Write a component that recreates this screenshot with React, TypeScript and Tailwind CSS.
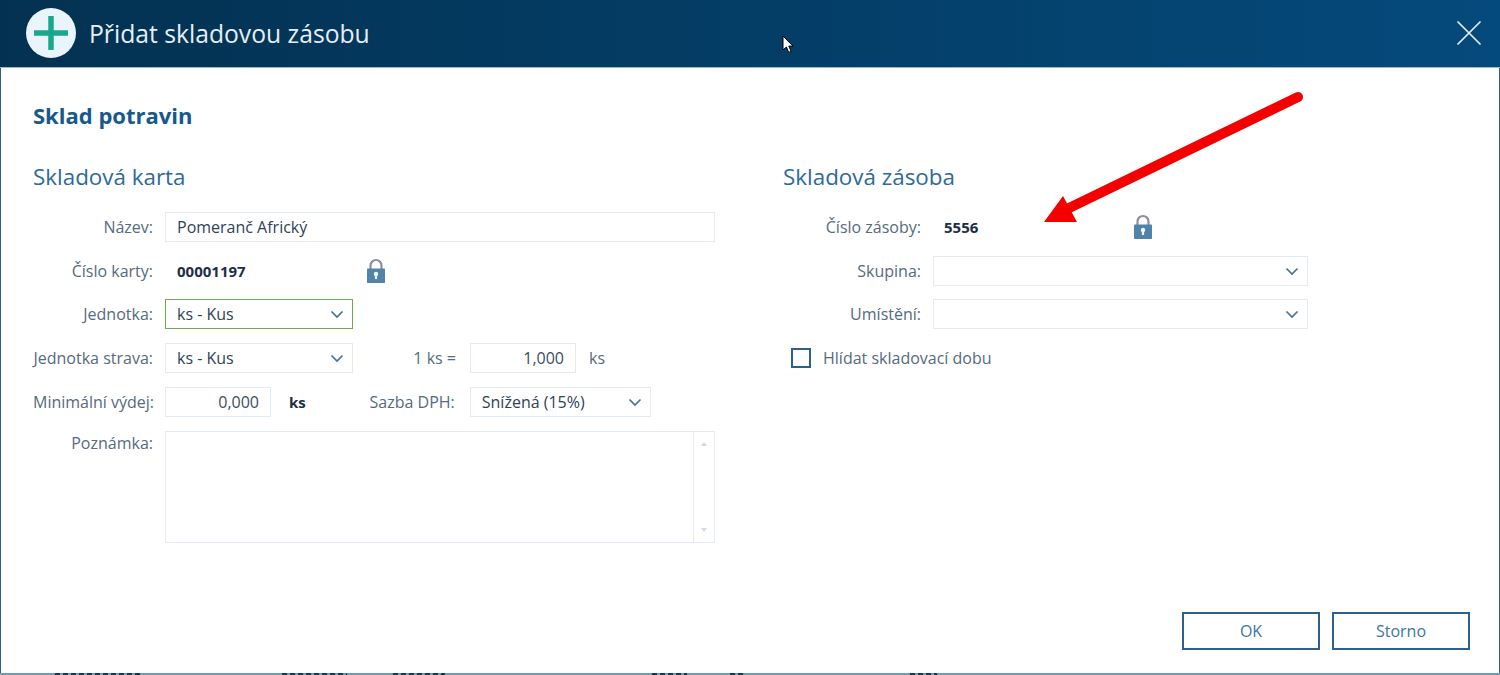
import React from 'react';

const font = "font-['Open_Sans',sans-serif]";
const fieldBorder = 'border border-[#e3e9f5] bg-white';
const stripText = 'h-full bg-[repeating-linear-gradient(90deg,#12365a_0_5px,#6f9bb8_5px_8px)]';

function Chevron() {
  return (
    <svg width="14" height="9" viewBox="0 0 14 9" fill="none" className="shrink-0">
      <path d="M1.5 1.5 7 7l5.5-5.5" stroke="#4a7196" strokeWidth="1.7" />
    </svg>
  );
}

function Lock() {
  return (
    <svg width="20" height="26" viewBox="0 0 20 26">
      <path d="M4.5 12V7.5a5.5 5.5 0 0 1 11 0V12" fill="none" stroke="#8f8ea3" strokeWidth="2.2" />
      <rect x="1" y="10.5" width="18" height="14.5" rx="0.8" fill="#4f84a8" />
      <circle cx="10" cy="16" r="2.2" fill="#f2f7fa" />
      <rect x="8.9" y="16" width="2.2" height="5" fill="#f2f7fa" />
    </svg>
  );
}

function Label({ children, width = 'w-[120px]' }: { children: React.ReactNode; width?: string }) {
  return <div className={`${width} shrink-0 text-right whitespace-nowrap text-[#566a80]`}>{children}</div>;
}

function SelectBox({ value, width, green }: { value?: string; width: string; green?: boolean }) {
  return (
    <div className={`${width} h-[30px] flex items-center justify-between pl-[11px] pr-[8px] bg-white border text-[#2f4257] ${green ? 'border-[#6fa84f]' : 'border-[#e3e9f5]'}`}>
      <span>{value}</span>
      <Chevron />
    </div>
  );
}

function NumberBox({ value }: { value: string }) {
  return (
    <div className={`w-[106px] h-[30px] flex items-center justify-end pr-[11px] text-[#3b4d61] ${fieldBorder}`}>
      {value}
    </div>
  );
}

function Row({ children, className = '' }: { children: React.ReactNode; className?: string }) {
  return <div className={`flex items-center h-[30px] ${className}`}>{children}</div>;
}

export default function App() {
  return (
    <div className={`${font} relative flex flex-col h-[675px] w-[1500px] overflow-hidden bg-white text-[16px] leading-none`}>
      <div className="flex flex-col h-[673px] shrink-0 border-x border-[#2b5f8a]">
        <header className="-mx-px h-[68px] shrink-0 flex items-center justify-between pl-[26px] pr-[18px] pb-px bg-gradient-to-r from-[#033151] to-[#054a7c] border-b border-[#9db6cb]">
          <div className="flex items-center gap-[13px]">
            <div className="w-[50px] h-[50px] rounded-full bg-[#eaf5fb] flex items-center justify-center">
              <svg width="34" height="34" viewBox="0 0 34 34">
                <path d="M17 0v34M0 17h34" stroke="#1aa88c" strokeWidth="5.5" />
              </svg>
            </div>
            <h1 className="mt-[2px] text-[24.7px] text-[#e6eef4]">Přidat skladovou zásobu</h1>
          </div>
          <svg width="26" height="26" viewBox="0 0 26 26">
            <path d="M1.5 1.5l23 23M24.5 1.5l-23 23" stroke="#e6eef4" strokeWidth="1.7" />
          </svg>
        </header>

        <main className="flex-1 flex flex-col pl-[32px] pr-[29px] pb-[23px]">
          <h2 className="mt-[36px] h-[22px] text-[22px] font-bold text-[#17598c]">Sklad potravin</h2>

          <div className="mt-[40px] flex flex-1">
            <section className="w-[750px] shrink-0">
              <h3 className="h-[22px] text-[22.4px] text-[#2d6a99]">Skladová karta</h3>
              <div className="mt-[24px] flex flex-col gap-[14px]">
                <Row>
                  <Label>Název:</Label>
                  <div className={`ml-[12px] w-[550px] h-[30px] flex items-center pl-[11px] text-[#2f4257] ${fieldBorder}`}>Pomeranč Africký</div>
                </Row>
                <Row>
                  <Label>Číslo karty:</Label>
                  <b className="ml-[24px] w-[189px] text-[15px] text-[#1d2f45]">00001197</b>
                  <Lock />
                </Row>
                <Row className="-mt-px">
                  <Label>Jednotka:</Label>
                  <div className="ml-[12px]"><SelectBox value="ks - Kus" width="w-[188px]" green /></div>
                </Row>
                <Row>
                  <Label>Jednotka strava:</Label>
                  <div className="ml-[12px]"><SelectBox value="ks - Kus" width="w-[188px]" /></div>
                  <div className="w-[103px] text-right text-[#566a80]">1 ks =</div>
                  <div className="ml-[14px]"><NumberBox value="1,000" /></div>
                  <span className="ml-[13px] text-[#566a80]">ks</span>
                </Row>
                <Row>
                  <Label>Minimální výdej:</Label>
                  <div className="ml-[12px]"><NumberBox value="0,000" /></div>
                  <b className="ml-[18px] text-[15px] text-[#1d2f45]">ks</b>
                  <div className="w-[149px] text-right text-[#566a80]">Sazba DPH:</div>
                  <div className="ml-[15px]"><SelectBox value="Snížená (15%)" width="w-[181px]" /></div>
                </Row>
                <div className="flex items-start">
                  <Label><span className="block pt-[4px]">Poznámka:</span></Label>
                  <div className={`ml-[12px] w-[550px] h-[112px] flex justify-end ${fieldBorder}`}>
                    <div className="w-[21px] flex flex-col items-center justify-between py-[10px] border-l border-[#e6e9ee]">
                      <div className="w-0 h-0 border-x-[3.5px] border-x-transparent border-b-[4px] border-b-[#d4d8dd]" />
                      <div className="w-0 h-0 border-x-[3.5px] border-x-transparent border-t-[4px] border-t-[#d4d8dd]" />
                    </div>
                  </div>
                </div>
              </div>
            </section>

            <section className="flex-1">
              <h3 className="h-[22px] text-[22.4px] text-[#2d6a99]">Skladová zásoba</h3>
              <div className="mt-[24px] flex flex-col gap-[14px]">
                <Row>
                  <Label width="w-[138px]">Číslo zásoby:</Label>
                  <b className="ml-[23px] w-[189px] text-[15px] text-[#1d2f45]">5556</b>
                  <Lock />
                </Row>
                <Row>
                  <Label width="w-[138px]">Skupina:</Label>
                  <div className="ml-[12px]"><SelectBox width="w-[375px]" /></div>
                </Row>
                <Row className="-mt-px">
                  <Label width="w-[138px]">Umístění:</Label>
                  <div className="ml-[12px]"><SelectBox width="w-[375px]" /></div>
                </Row>
                <Row>
                  <div className="ml-[8px] w-[20px] h-[20px] border-2 border-[#2b6090] bg-white" />
                  <span className="ml-[12px] text-[#566a80]">Hlídat skladovací dobu</span>
                </Row>
              </div>
            </section>
          </div>

          <footer className="flex justify-end gap-[12px]">
            <button className="w-[138px] h-[38px] border-2 border-[#2b6090] text-[#3f74a3] text-[16px]">OK</button>
            <button className="w-[138px] h-[38px] border-2 border-[#2b6090] text-[#3f74a3] text-[16px]">Storno</button>
          </footer>
        </main>
      </div>

      {/* table behind the dialog, only its top edge shows */}
      <div className="h-[2px] shrink-0 flex bg-[#6f9bb8] pl-[55px]">
        <div className={`${stripText} w-[88px]`} />
        <div className={`${stripText} ml-[139px] w-[65px]`} />
        <div className={`${stripText} ml-[46px] w-[52px]`} />
        <div className={`${stripText} ml-[207px] w-[35px]`} />
        <div className={`${stripText} ml-[43px] w-[15px]`} />
        <div className={`${stripText} ml-[165px] w-[27px]`} />
      </div>

      {/* red annotation arrow */}
      <svg className="absolute left-[1040px] top-[88px]" width="270" height="140" viewBox="0 0 270 140">
        <path d="M258 9 L25 122" stroke="#f30000" strokeWidth="10" strokeLinecap="round" fill="none" />
        <path d="M4 134 L23 108 L37 134 Z" fill="#f30000" />
      </svg>

      {/* mouse pointer */}
      <svg className="absolute left-[782px] top-[35px]" width="13" height="19" viewBox="0 0 13 19">
        <path d="M1 1v14l3.4-3 2.3 5.4 2.4-1-2.3-5.3H11Z" fill="#fff" stroke="#000" strokeWidth="1" />
      </svg>
    </div>
  );
}
